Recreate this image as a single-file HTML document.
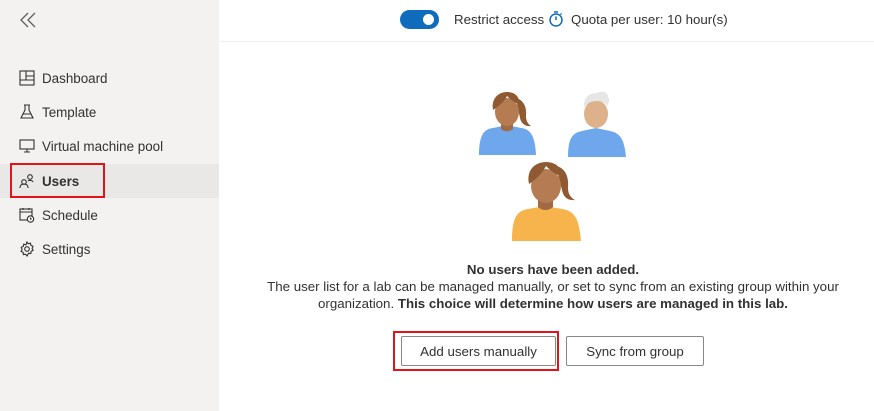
<!DOCTYPE html>
<html><head><style>
*{margin:0;padding:0;box-sizing:border-box}
body{width:874px;height:411px;overflow:hidden;font-family:"Liberation Sans",sans-serif;background:#fff;position:relative;color:#323130;font-size:13.3px}
.side{position:absolute;left:0;top:0;width:219px;height:411px;background:#f3f2f1}
.item{position:absolute;left:0;width:219px;height:34px;display:flex;align-items:center;padding-left:42px;font-size:13.4px;color:#323130}
.item svg{position:absolute;left:19px;top:9px}
.sel{background:#e9e8e7;font-weight:bold}
.red{position:absolute;border:2px solid #e3131b}
.hdr{position:absolute;left:219px;top:0;right:0;height:42px;border-bottom:1px solid #f0f0f0}
.btn{position:absolute;height:30px;border:1px solid #8a8886;background:#fff;display:flex;align-items:center;justify-content:center;font-size:13.3px;color:#323130;border-radius:2px}
.txt{position:absolute;left:232px;right:0;text-align:center;font-size:13.3px;color:#323130;line-height:17px}
</style></head><body>
<div class="side">
<svg style="position:absolute;left:19px;top:12px" width="18" height="16" viewBox="0 0 18 16" fill="none" stroke="#605e5c" stroke-width="1.3"><path d="M9 1L2 8l7 7M16 1L9 8l7 7"/></svg>
<div class="item" style="top:61px"><svg width="16" height="16" viewBox="0 0 16 16" fill="none" stroke="#323130" stroke-width="1.1"><rect x="1" y="1" width="14" height="14"/><path d="M7 1v9M1 10h14M7 6h8"/></svg>Dashboard</div>
<div class="item" style="top:95px"><svg width="16" height="16" viewBox="0 0 16 16" fill="none" stroke="#323130" stroke-width="1.1"><path d="M5 1h6M6 1v5L2 14h12L10 6V1M4 10h8"/></svg>Template</div>
<div class="item" style="top:129px"><svg width="16" height="16" viewBox="0 0 16 16" fill="none" stroke="#323130" stroke-width="1.1"><rect x="1" y="2" width="14" height="9"/><path d="M8 11v3M5 14h6"/></svg>Virtual machine pool</div>
<div class="item sel" style="top:164px"><svg width="16" height="16" viewBox="0 0 16 16" fill="none" stroke="#323130" stroke-width="1.1"><circle cx="5" cy="9" r="2.3"/><path d="M1 15c0-3 2-4 4-4s4 1 4 4"/><circle cx="11" cy="4" r="2.3"/><path d="M9 8c1-1 4-1 5 1"/></svg>Users</div>
<div class="item" style="top:198px"><svg width="16" height="16" viewBox="0 0 16 16" fill="none" stroke="#323130" stroke-width="1.1"><rect x="1" y="2" width="12" height="11"/><path d="M1 5h12M4 1v2M10 1v2"/><circle cx="11.5" cy="12" r="3.2" fill="#f3f2f1"/><path d="M11.5 10.5v1.5h1.3"/></svg>Schedule</div>
<div class="item" style="top:232px"><svg width="16" height="16" viewBox="0 0 16 16" fill="none" stroke="#323130" stroke-width="1.1"><circle cx="8" cy="8" r="2.3"/><path d="M8 1l1.3 1.8 2.2-.6.4 2.2 2.1.9-.9 2.1 1 2-2 1-.3 2.2-2.2-.4L8 15l-1.4-1.8-2.2.4-.3-2.2-2-1 1-2-.9-2.1 2.1-.9.4-2.2 2.2.6z"/></svg>Settings</div>
</div>
<div class="red" style="left:10px;top:163px;width:95px;height:35px"></div>
<div class="hdr"></div>
<div style="position:absolute;left:400px;top:10px;width:39px;height:19px;border-radius:10px;background:#0f6cbd"><div style="position:absolute;right:5px;top:4px;width:11px;height:11px;border-radius:50%;background:#fff"></div></div>
<div style="position:absolute;left:454px;top:12px;font-size:13.3px">Restrict access</div>
<svg style="position:absolute;left:548px;top:10px" width="16" height="18" viewBox="0 0 16 18" fill="none" stroke="#0f6cbd" stroke-width="1.5"><circle cx="8" cy="10" r="6"/><path d="M6 2h4M8 10V6.5M12.5 4.5l1-1"/></svg>
<div style="position:absolute;left:571px;top:12px;font-size:13.3px">Quota per user: 10 hour(s)</div>
<svg style="position:absolute;left:470px;top:85px" width="170" height="160" viewBox="470 85 170 160">
<path d="M479 155c0-20 5-26 14-27l14-3 14 3c9 1 14 7 15 27z" fill="#6ea7ec"/>
<path d="M516 98c8 2 11 10 10 18 0 5 2 8 5 10-6 1-10-3-11-8z" fill="#8f5a32"/>
<path d="M501 122h12v7c-3 3-9 3-12 0z" fill="#a06a45"/>
<ellipse cx="507" cy="112" rx="12" ry="14" fill="#b57b52"/>
<path d="M493 110c-2-12 6-18 14-18 9 0 13 6 12 12-6-2-10-6-12-8-3 6-8 10-14 14z" fill="#8f5a32"/>
<path d="M568 157c0-20 5-24 14-26l14-3 14 3c9 2 14 6 16 26z" fill="#6ea7ec"/>
<ellipse cx="596" cy="114" rx="12" ry="14" fill="#ddb28a"/>
<path d="M584 108c-1-10 5-15 13-15 5-3 11-1 11 4 2 2 1 6-1 9-2-5-10-6-16-4-3 1-5 3-7 6z" fill="#e6e6e6"/>
<path d="M512 241c0-24 5-30 16-32l17-3 17 3c12 2 17 8 19 32z" fill="#f8b44c"/>
<path d="M556 166c10 2 13 12 12 22 0 6 3 10 7 12-8 1-12-4-13-10z" fill="#8f5a32"/>
<path d="M538 198h15v9c-4 4-11 4-15 0z" fill="#a06a45"/>
<ellipse cx="546" cy="186" rx="15" ry="17" fill="#b57b52"/>
<path d="M529 184c-3-15 7-22 17-22 11 0 16 7 15 14-7-2-12-7-15-10-4 8-10 13-17 18z" fill="#8f5a32"/>
</svg>
<div class="txt" style="top:261px;font-weight:bold">No users have been added.</div>
<div class="txt" style="top:278px">The user list for a lab can be managed manually, or set to sync from an existing group within your</div>
<div class="txt" style="top:295px">organization. <b>This choice will determine how users are managed in this lab.</b></div>
<div class="btn" style="left:401px;top:336px;width:155px">Add users manually</div>
<div class="red" style="left:393px;top:331px;width:166px;height:40px"></div>
<div class="btn" style="left:566px;top:336px;width:138px">Sync from group</div>
</body></html>
